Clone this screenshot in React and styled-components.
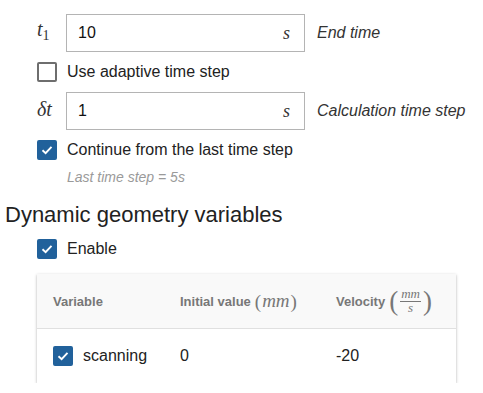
import React from "react";
import styled, { createGlobalStyle } from "styled-components";

const Global = createGlobalStyle`
  html, body { margin: 0; padding: 0; background: #fff; }
  body { font-family: "Liberation Sans", Arial, sans-serif; color: #222; }
`;

const Page = styled.div`
  padding: 14px 0 0 5px;
  width: 478px;
`;

const Indent = styled.div`
  margin-left: 32px;
  display: flex;
  flex-direction: column;
`;

const FieldRow = styled.div`
  display: flex;
  align-items: center;
  height: 38px;
  margin-top: ${(p) => p.$mt || 0}px;
`;

const SymLabel = styled.div`
  width: 29px;
  font-family: "Liberation Serif", "DejaVu Serif", serif;
  font-style: italic;
  font-size: 20px;
  color: #333;
  padding-bottom: 4px;
  sub {
    font-style: normal;
    font-size: 14px;
    vertical-align: -4px;
  }
`;

const InputBox = styled.div`
  box-sizing: border-box;
  width: 239px;
  height: 38px;
  border: 1px solid #b4b4b4;
  display: flex;
  align-items: center;
  padding: 0 14px 0 11px;
  font-size: 16px;
  color: #111;
`;

const Value = styled.span`
  flex: 1;
`;

const Unit = styled.span`
  font-family: "Liberation Serif", "DejaVu Serif", serif;
  font-style: italic;
  font-size: 18px;
  color: #333;
`;

const Desc = styled.span`
  margin-left: 12px;
  font-style: italic;
  font-size: 16px;
  color: #333;
`;

const CheckRow = styled.label`
  display: flex;
  align-items: center;
  gap: 10px;
  font-size: 16px;
  color: #222;
  height: 20px;
  margin-top: ${(p) => p.$mt || 0}px;
`;

const Box = styled.span`
  box-sizing: border-box;
  width: 20px;
  height: 20px;
  border-radius: 2px;
  flex: none;
  display: inline-flex;
  align-items: center;
  justify-content: center;
  background: ${(p) => (p.$checked ? "#21619b" : "#fff")};
  border: 2px solid ${(p) => (p.$checked ? "#21619b" : "#6e6e6e")};
`;

const Check = ({ checked }) => (
  <Box $checked={checked}>
    {checked && (
      <svg width="14" height="14" viewBox="0 0 14 14">
        <path d="M2.5 7.3 L5.6 10.2 L11.5 3.8" fill="none" stroke="#fff" strokeWidth="1.9" />
      </svg>
    )}
  </Box>
);

const Hint = styled.div`
  margin: 9px 0 0 30px;
  font-size: 14px;
  font-style: italic;
  color: #9a9a9a;
`;

const Heading = styled.h2`
  margin: 17px 0 0 0;
  font-weight: normal;
  font-size: 22px;
  color: #222;
  line-height: 26px;
`;

const Card = styled.div`
  margin-top: 15px;
  width: 419px;
  background: #fff;
  box-shadow: 0 1px 3px rgba(0, 0, 0, 0.25), 0 1px 1px rgba(0, 0, 0, 0.12);
`;

const TRow = styled.div`
  display: grid;
  grid-template-columns: 127px 156px 1fr;
  align-items: center;
  height: 54px;
  padding-left: 16px;
  background: ${(p) => (p.$head ? "#f9f9f9" : "#fff")};
  border-bottom: ${(p) => (p.$head ? "1px solid #e0e0e0" : "none")};
`;

const HeadCell = styled.div`
  font-size: 13px;
  font-weight: bold;
  color: #777;
  display: flex;
  align-items: center;
  gap: 4px;
`;

const Cell = styled.div`
  font-size: 16px;
  color: #222;
  display: flex;
  align-items: center;
  gap: 10px;
`;

const Math = styled.span`
  font-family: "Liberation Serif", "DejaVu Serif", serif;
  font-weight: normal;
  font-size: 19px;
  color: #777;
  display: inline-flex;
  align-items: center;
  i { font-style: italic; padding: 0 1px; }
`;

const Paren = styled.span`
  font-size: ${(p) => p.$size || 19}px;
  font-style: normal;
  line-height: 1;
`;

const Frac = styled.span`
  display: inline-flex;
  flex-direction: column;
  align-items: center;
  font-style: italic;
  font-size: 13px;
  line-height: 12px;
  margin: 0 2px;
  span:first-child { border-bottom: 1px solid #777; padding: 0 1px 1px; }
`;

export default function App() {
  return (
    <>
      <Global />
      <Page>
        <Indent>
          <FieldRow>
            <SymLabel>t<sub>1</sub></SymLabel>
            <InputBox>
              <Value>10</Value>
              <Unit>s</Unit>
            </InputBox>
            <Desc>End time</Desc>
          </FieldRow>
          <CheckRow $mt={10}>
            <Check checked={false} />
            Use adaptive time step
          </CheckRow>
          <FieldRow $mt={10}>
            <SymLabel>δt</SymLabel>
            <InputBox>
              <Value>1</Value>
              <Unit>s</Unit>
            </InputBox>
            <Desc>Calculation time step</Desc>
          </FieldRow>
          <CheckRow $mt={10}>
            <Check checked />
            Continue from the last time step
          </CheckRow>
          <Hint>Last time step = 5s</Hint>
        </Indent>
        <Heading>Dynamic geometry variables</Heading>
        <Indent>
          <CheckRow $mt={11}>
            <Check checked />
            Enable
          </CheckRow>
          <Card>
            <TRow $head>
              <HeadCell>Variable</HeadCell>
              <HeadCell>
                Initial value
                <Math>
                  <Paren>(</Paren>
                  <i>mm</i>
                  <Paren>)</Paren>
                </Math>
              </HeadCell>
              <HeadCell>
                Velocity
                <Math>
                  <Paren $size={27}>(</Paren>
                  <Frac>
                    <span>mm</span>
                    <span>s</span>
                  </Frac>
                  <Paren $size={27}>)</Paren>
                </Math>
              </HeadCell>
            </TRow>
            <TRow>
              <Cell>
                <Check checked />
                scanning
              </Cell>
              <Cell>0</Cell>
              <Cell>-20</Cell>
            </TRow>
          </Card>
        </Indent>
      </Page>
    </>
  );
}
